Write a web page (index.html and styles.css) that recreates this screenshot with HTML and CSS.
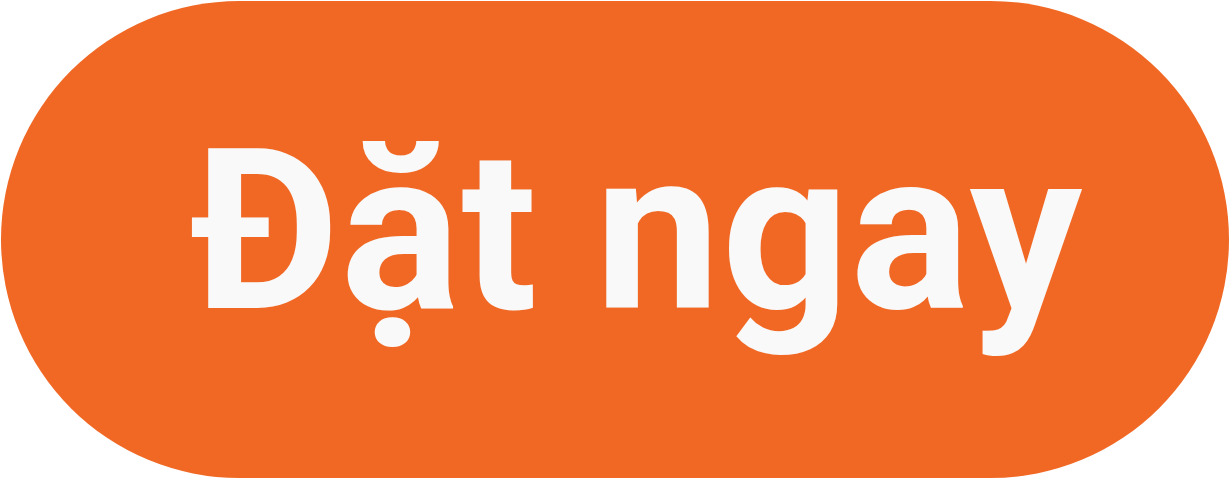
FILE: index.html
```html
<!DOCTYPE html>
<html lang="vi">
<head>
<meta charset="utf-8">
<link rel="stylesheet" href="styles.css">
</head>
<body>
<div class="page">
  <a class="btn" href="#"><span class="label">Đặt ngay</span></a>
</div>
</body>
</html>
```
FILE: styles.css
```css
html, body {
  margin: 0;
  padding: 0;
  background: #ffffff;
}
.page {
  width: 1230px;
  height: 479px;
  padding: 1px;
  box-sizing: border-box;
}
.btn {
  display: flex;
  align-items: center;
  justify-content: center;
  width: 100%;
  height: 100%;
  background: #f06824;
  border-radius: 239px;
  text-decoration: none;
  box-sizing: border-box;
  padding-left: 44px;
  padding-bottom: 16px;
}
.label {
  font-family: "Roboto", "Liberation Sans", sans-serif;
  font-weight: 700;
  font-size: 224px;
  line-height: 1;
  letter-spacing: 1px;
  color: #f9f9f9;
  white-space: nowrap;
}
```
